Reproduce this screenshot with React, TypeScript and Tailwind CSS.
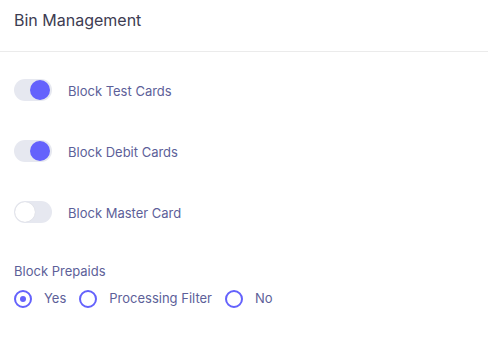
import React from "react";

function Toggle({ on, label }: { on: boolean; label: string }) {
  return (
    <div className="flex items-center h-[22px]">
      <div className="relative w-[38px] h-[22px] rounded-full bg-[#e6e8f0]">
        <div
          className={
            on
              ? "absolute top-[1px] right-[2px] w-[20px] h-[20px] rounded-full bg-[#6462fc]"
              : "absolute top-[1px] left-[1px] w-[20px] h-[20px] rounded-full bg-white shadow-[0_0_1px_rgba(0,0,0,0.15)]"
          }
        />
      </div>
      <span className="ml-[16px] text-[13px] leading-[22px] pt-[1px] text-[#5d5f99]">{label}</span>
    </div>
  );
}

function Radio({ checked, label }: { checked: boolean; label: string }) {
  return (
    <div className="flex items-center">
      <div className="w-[18px] h-[18px] rounded-full border-2 border-[#6462fc] flex items-center justify-center">
        {checked && <div className="w-[6px] h-[6px] rounded-full bg-[#6462fc]" />}
      </div>
      <span className="ml-[12px] text-[13px] text-[#5d5f99]">{label}</span>
    </div>
  );
}

export default function App() {
  return (
    <div
      className="w-[488px] h-[342px] bg-white"
      style={{ fontFamily: "Inter, 'Noto Sans', sans-serif" }}
    >
      <div className="h-[52px] border-b border-[#ebebeb] px-[14px] pt-[8px]">
        <div className="text-[16px] leading-[24px] text-[#3d3c52]">Bin Management</div>
      </div>
      <div className="px-[14px] pt-[27px] flex flex-col gap-[39px]">
        <Toggle on label="Block Test Cards" />
        <Toggle on label="Block Debit Cards" />
        <Toggle on={false} label="Block Master Card" />
      </div>
      <div className="px-[14px] mt-[38px] text-[13px] leading-[20px] text-[#5d5f99]">Block Prepaids</div>
      <div className="px-[14px] mt-[8px] flex items-center gap-[13px]">
        <Radio checked label="Yes" />
        <Radio checked={false} label="Processing Filter" />
        <Radio checked={false} label="No" />
      </div>
    </div>
  );
}
